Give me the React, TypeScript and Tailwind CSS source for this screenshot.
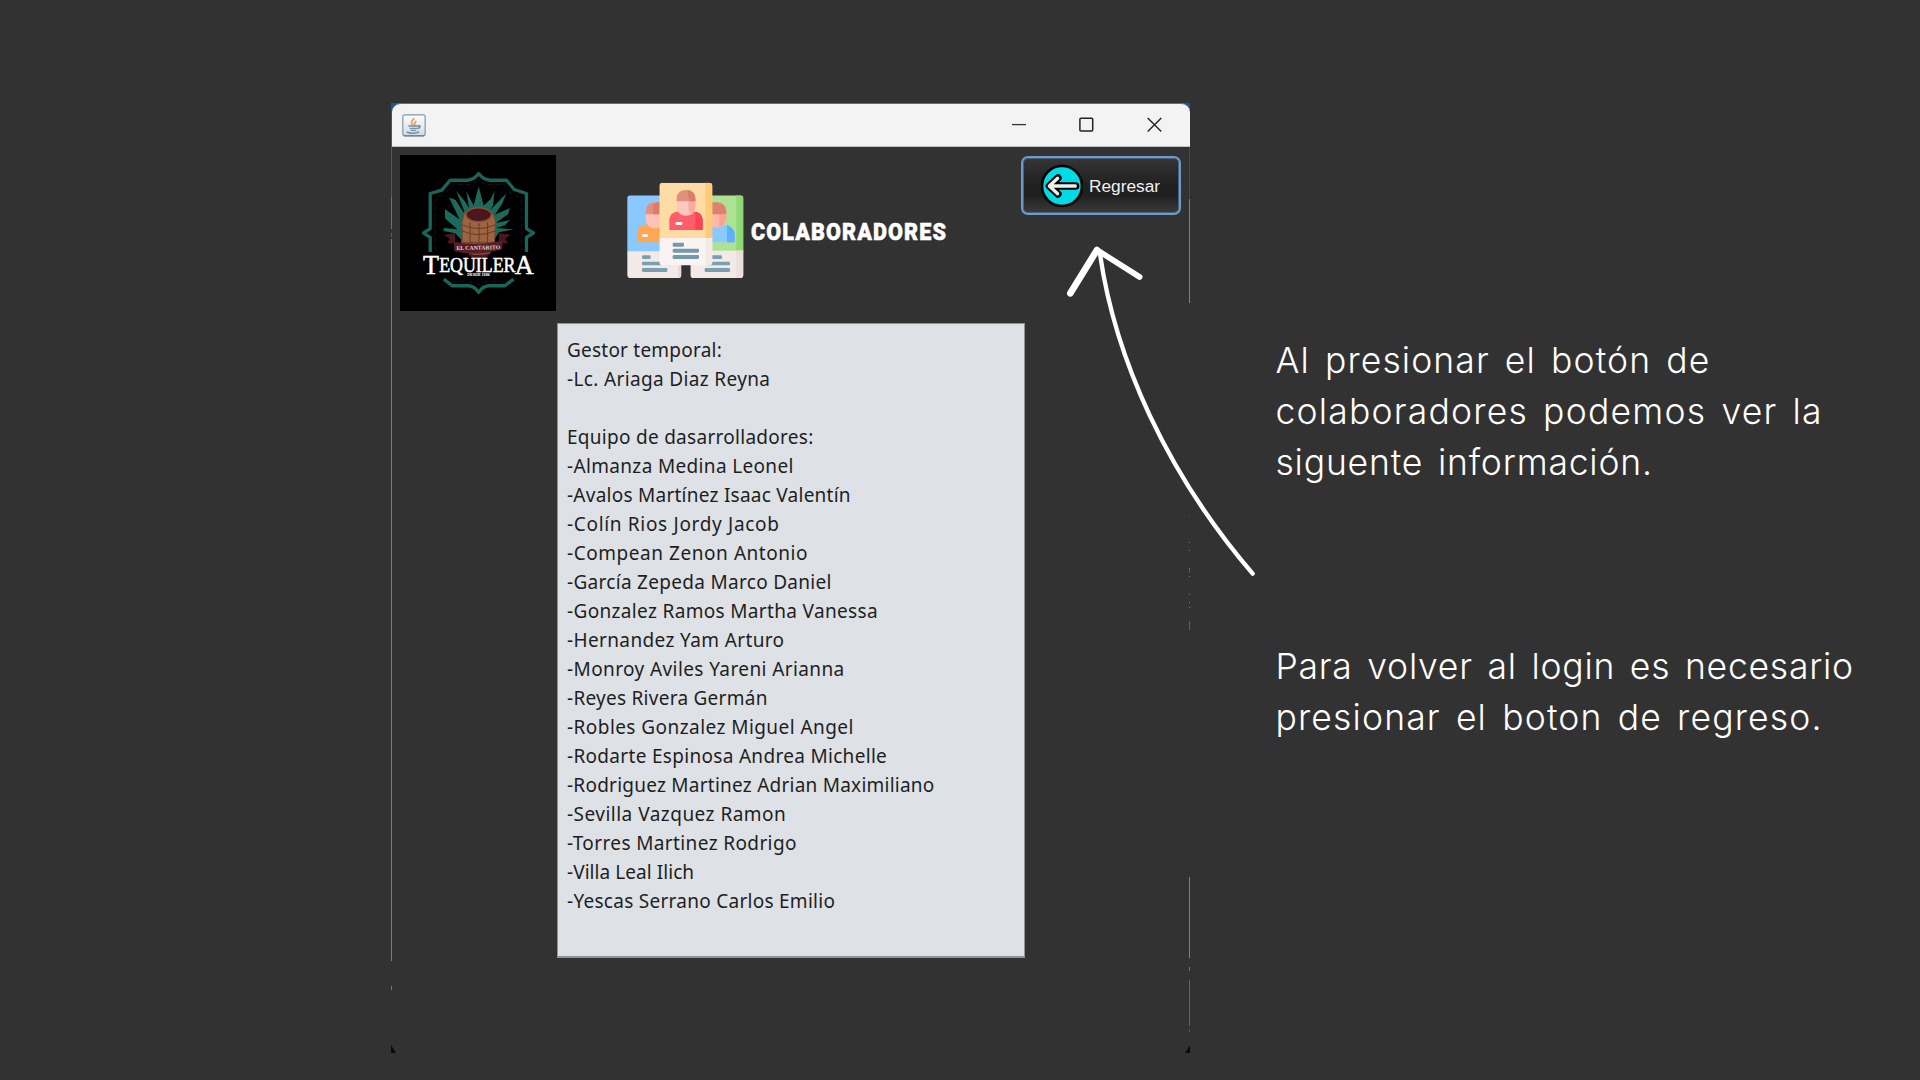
const people: [string, string][] = [
  ["Gestor temporal:", "tracking-[0.22px]"],
  ["-Lc. Ariaga Diaz Reyna", "tracking-[0.35px]"],
  ["", "tracking-normal"],
  ["Equipo de dasarrolladores:", "tracking-[0.28px]"],
  ["-Almanza Medina Leonel", "tracking-[0.34px]"],
  ["-Avalos Martínez Isaac Valentín", "tracking-[0.25px]"],
  ["-Colín Rios Jordy Jacob", "tracking-[0.68px]"],
  ["-Compean Zenon Antonio", "tracking-[0.55px]"],
  ["-García Zepeda Marco Daniel", "tracking-[0.3px]"],
  ["-Gonzalez Ramos Martha Vanessa", "tracking-[0.34px]"],
  ["-Hernandez Yam Arturo", "tracking-[0.37px]"],
  ["-Monroy Aviles Yareni Arianna", "tracking-[0.4px]"],
  ["-Reyes Rivera Germán", "tracking-[0.26px]"],
  ["-Robles Gonzalez Miguel Angel", "tracking-[0.44px]"],
  ["-Rodarte Espinosa Andrea Michelle", "tracking-[0.31px]"],
  ["-Rodriguez Martinez Adrian Maximiliano", "tracking-[0.24px]"],
  ["-Sevilla Vazquez Ramon", "tracking-[0.48px]"],
  ["-Torres Martinez Rodrigo", "tracking-[0.38px]"],
  ["-Villa Leal Ilich", "tracking-[0.06px]"],
  ["-Yescas Serrano Carlos Emilio", "tracking-[0.27px]"],
];

function JavaIcon() {
  return (
    <svg width="24" height="23" viewBox="0 0 72 69">
      <defs>
        <linearGradient id="jv" x1="0" y1="0" x2="0" y2="1">
          <stop offset="0" stopColor="#fdfdfd" />
          <stop offset="1" stopColor="#d5dbe1" />
        </linearGradient>
      </defs>
      <rect x="2.5" y="2.5" width="67" height="63" rx="6" fill="url(#jv)" stroke="#7c97ab" strokeWidth="3.5" />
      <path d="M6 65.5h60" stroke="#56788f" strokeWidth="3" />
      <path d="M37 13c-5 6-11 9-8 15 2 4 6 4 5 9M43 21c-6 4-7 7-4 13" fill="none" stroke="#eda35f" strokeWidth="5" />
      <path d="M19 36h29c7-4 9 5-2 8" fill="none" stroke="#6f91ab" strokeWidth="5" />
      <path d="M23 43h22M26 49h17" stroke="#6f91ab" strokeWidth="4" />
      <path d="M14 54c9 5 30 5 38-1" fill="none" stroke="#6f91ab" strokeWidth="4.5" />
    </svg>
  );
}

function Logo() {
  return (
    <svg className="block" width="156" height="156" viewBox="14 14 470 470">
      <rect x="14" y="14" width="471" height="471" fill="#000" />
      <g fill="none" stroke="#1b6558" strokeWidth="10" strokeLinejoin="round">
        <path d="M105 306V262L85 249L105 236V130L140 120L165 90H218Q238 88 251 70Q264 88 284 90H335L358 118L395 130V236L416 249L395 262V306" />
        <path d="M146 388L171 408H220Q240 410 251 428Q262 410 282 408H330L356 388" />
      </g>
      <g fill="none" stroke="#123a34" strokeWidth="1.6" strokeDasharray="10 6 3 5">
        <path d="M120 300V145L150 131L175 103H228L251 92L275 103H325L350 131L381 145V300" />
        <path d="M175 396H228L251 404L275 396H325" />
      </g>
      <path
        fill="#1c6a5c"
        d="M212 282L180 250L145 243L146 234L187 238L150 205L149 177L182 200L193 207L162 142L181 149L206 188L208 184L183 122L210 154L222 175L214 124L236 166L251 109L266 166L288 146L299 122L294 166L286 180L334 130L322 160L300 194L345 174L340 192L303 219L345 210L330 226L303 234L357 238L312 247L290 282Z"
      />
      <path fill="#4a161f" d="M146 254L180 250V280H156L164 266ZM347 254L312 250V280H340L331 266Z" />
      <path fill="#7d4a30" d="M209 184Q250 165 291 184L303 212L300 278L285 312Q250 322 222 312L198 278L200 212Z" />
      <path fill="#9c6440" d="M209 190L222 205H280L292 190L300 214L297 275H204L203 214Z" />
      <ellipse cx="251" cy="194" rx="38" ry="21" fill="#4a1721" stroke="#8a5132" strokeWidth="4" />
      <path d="M201 224Q250 247 302 224M200 242Q250 266 302 242M225 216V280M252 220V280M278 216V280" fill="none" stroke="#6b3927" strokeWidth="3" />
      <path fill="#5a1d28" d="M176 275Q250 292 324 270L322 298Q250 320 178 304Z" />
      <path fill="#4a161f" d="M215 312Q250 320 288 310L270 324H232Z" />
      <text x="250" y="299" textAnchor="middle" fontFamily="Liberation Serif, serif" fontSize="17" fontWeight="700" fill="#e8dcdc" textLength="132" lengthAdjust="spacingAndGlyphs" transform="rotate(-1 250 299)">
        EL CANTARITO
      </text>
      <g fill="#fff" stroke="#fff" strokeWidth="1.6" fontFamily="Liberation Serif, serif">
        <text x="83" y="373" fontSize="82" textLength="48" lengthAdjust="spacingAndGlyphs">T</text>
        <text x="132" y="366" fontSize="64" textLength="230" lengthAdjust="spacingAndGlyphs">EQUILER</text>
        <text x="360" y="373" fontSize="82" textLength="57" lengthAdjust="spacingAndGlyphs">A</text>
      </g>
      <text x="251" y="380" textAnchor="middle" fontFamily="Liberation Sans, sans-serif" fontSize="12" fontWeight="700" fill="#fff" textLength="68" lengthAdjust="spacingAndGlyphs">
        DESDE 1986
      </text>
    </svg>
  );
}

function TeamIcon() {
  return (
    <svg className="block" width="117" height="97" viewBox="0 0 351 291">
      <defs>
        <clipPath id="cl"><rect x="1" y="40" width="162" height="248" rx="10" /></clipPath>
        <clipPath id="cr"><rect x="190" y="40" width="159" height="248" rx="10" /></clipPath>
        <clipPath id="cc"><rect x="97" y="2" width="159" height="248" rx="10" /></clipPath>
      </defs>
      <g clipPath="url(#cl)">
        <rect y="40" width="163" height="170" fill="#8ac9fe" />
        <rect y="208" width="163" height="82" fill="#f3e9e6" />
        <rect x="154" y="208" width="10" height="82" fill="#e6d9d7" />
        <path d="M31 181V150Q33 130 52 128H110V181Z" fill="#ffa755" />
        <rect x="56" y="61" width="54" height="78" rx="27" fill="#fbc3b6" />
        <path d="M56 97V88Q58 61 83 61H100V97Z" fill="#e58f7e" />
        <path d="M78 97V70Q84 61 97 61V97Z" fill="#da7c6c" />
        <rect x="45" y="157" width="18" height="8" rx="4" fill="#fff" />
        <g fill="#7a9fb0">
          <rect x="45" y="220" width="26" height="11" rx="4" />
          <rect x="45" y="239" width="60" height="11" rx="4" />
          <rect x="45" y="258" width="76" height="12" rx="4" />
        </g>
      </g>
      <g clipPath="url(#cr)">
        <rect x="190" y="40" width="160" height="170" fill="#ace294" />
        <rect x="328" y="40" width="22" height="170" fill="#8fd873" />
        <rect x="190" y="206" width="160" height="84" fill="#f3e9e6" />
        <rect x="328" y="206" width="22" height="84" fill="#ebdfdd" />
        <path d="M240 181V128H290Q320 129 323 158V181Z" fill="#8ac9fe" />
        <path d="M300 181V129Q323 138 323 158V181Z" fill="#5db0fb" />
        <rect x="244" y="61" width="54" height="76" rx="27" fill="#fbb9ab" />
        <path d="M277 97V136Q298 130 298 100V97Z" fill="#f9a392" />
        <path d="M244 97V61H270Q296 62 298 88V97Z" fill="#de8170" />
        <g fill="#7a9fb0">
          <rect x="240" y="220" width="45" height="11" rx="4" />
          <rect x="240" y="239" width="69" height="11" rx="4" />
          <rect x="233" y="258" width="76" height="12" rx="4" />
        </g>
      </g>
      <g clipPath="url(#cc)">
        <rect x="97" y="2" width="160" height="168" fill="#ffdba6" />
        <rect x="235" y="2" width="22" height="168" fill="#ffcb7a" />
        <rect x="97" y="168" width="160" height="84" fill="#f9f4f3" />
        <rect x="235" y="168" width="22" height="84" fill="#f3eae8" />
      </g>
      <path d="M127 144V112Q130 91 150 89H203Q224 91 227 112V144Z" fill="#ff5d69" />
      <path d="M205 144V89Q224 91 227 112V144Z" fill="#fe444f" />
      <path d="M149 50H205V74Q202 101 177 101Q152 101 149 74Z" fill="#fdc9be" />
      <path d="M184 50H205V74Q203 92 192 96Q184 90 184 74Z" fill="#fbab9c" />
      <path d="M149 58V48Q152 24 177 24Q202 24 205 48V58Z" fill="#e18f7f" />
      <path d="M182 24Q202 26 205 48V58H190Q182 45 182 24Z" fill="#d97c69" />
      <rect x="146" y="120" width="20" height="9" rx="4" fill="#fff" />
      <g fill="#7399ab">
        <rect x="137" y="182" width="34" height="12" rx="4" />
        <rect x="137" y="200" width="79" height="12" rx="4" />
        <rect x="137" y="219" width="79" height="12" rx="4" />
      </g>
    </svg>
  );
}

function BackIcon() {
  return (
    <svg width="42" height="44" viewBox="0 0 126 132">
      <circle cx="63" cy="66" r="60" fill="#02dbe6" stroke="#050505" strokeWidth="8" />
      <path d="M104 66H30M51 42L25 66L51 90" fill="none" stroke="#050505" strokeWidth="22" strokeLinecap="round" strokeLinejoin="round" />
      <path d="M103 66H30M50 43L25 66L50 89" fill="none" stroke="#eceff0" strokeWidth="10" strokeLinecap="round" strokeLinejoin="round" />
    </svg>
  );
}

function Edge({ side }: { side: "left" | "right" }) {
  if (side === "left")
    return (
      <div className="flex w-px flex-col">
        <div className="h-[50px] bg-[#3c5f78]" />
        <div className="h-[32px] bg-[#6f7378]" />
        <div className="mt-[4px] h-[4px] bg-[#5c5c5c]" />
        <div className="mt-[2px] h-[722px] bg-[#7d7d7d]" />
        <div className="mt-[25px] h-[4px] bg-[#777]" />
      </div>
    );
  return (
    <div className="flex w-px flex-col">
      <div className="h-[51px] bg-[#44456a]" />
      <div className="mt-[1px] h-[104px] bg-[#7d7d7d]" />
      <div className="mt-[212px] h-px bg-[#5a5140]" />
      <div className="mt-[26px] h-px bg-[#777]" />
      <div className="mt-[7px] h-px bg-[#777]" />
      <div className="mt-[17px] h-[2px] bg-[#777]" />
      <div className="mt-[1px] h-px bg-[#777]" />
      <div className="mt-[4px] h-px bg-[#777]" />
      <div className="mt-[17px] h-px bg-[#777]" />
      <div className="mt-[7px] h-px bg-[#777]" />
      <div className="mt-[4px] h-px bg-[#777]" />
      <div className="mt-[13px] h-[9px] bg-[#4f6470]" />
      <div className="mt-[247px] h-[81px] bg-[#7d7d7d]" />
      <div className="mt-[9px] h-[4px] bg-[#777]" />
      <div className="mt-[9px] h-[46px] bg-[#666]" />
      <div className="mt-[3px] h-[3px] bg-[#47564f]" />
    </div>
  );
}

export default function App() {
  return (
    <main className="relative flex h-[1080px] w-[1920px] overflow-hidden bg-[#323232] pl-[391px] pt-[103px]">
      <section className="flex h-[950px] w-[799px] shrink-0 flex-col">
        <div className="h-[44px] bg-[linear-gradient(to_bottom,#1a56a0_0,#1a56a0_8px,#3c5f78_30px)]">
          <header className="ml-px flex h-[44px] w-[798px] items-center rounded-t-[9px] border-b border-t border-b-[#bcc4c1] border-t-[#54729a] bg-[#f3f3f3] pl-[10px]">
            <JavaIcon />
            <div className="ml-auto flex items-center">
              <svg width="14" height="16" viewBox="0 0 14 16"><path d="M0 7.6h14" stroke="#333" strokeWidth="1.3" /></svg>
              <svg className="ml-[53px]" width="15" height="16" viewBox="0 0 15 16"><rect x="0.9" y="1.2" width="12.8" height="12.8" rx="1" fill="none" stroke="#222" strokeWidth="1.5" /></svg>
              <svg className="ml-[53px] mr-[28px]" width="15" height="16" viewBox="0 0 15 16"><path d="M0.7 1L14.3 14.6M14.3 1L0.7 14.6" stroke="#222" strokeWidth="1.4" /></svg>
            </div>
          </header>
        </div>
        <div className="flex h-[906px]">
          <Edge side="left" />
          <div className="flex w-[797px] flex-col">
            <div className="flex h-[176px] items-start">
              <div className="ml-[8px] mt-[8px]"><Logo /></div>
              <div className="ml-[71px] mt-[35px]"><TeamIcon /></div>
              <h1 className="ml-[7px] mt-[71px] w-[200px] origin-left scale-x-90 font-['Roboto',sans-serif] text-[24px] font-black leading-[28px] tracking-[1.2px] text-white [-webkit-text-stroke:0.5px_#fff]">
                COLABORADORES
              </h1>
              <button className="ml-[70px] mt-[9px] flex h-[59px] w-[160px] shrink-0 items-center rounded-[7px] border-2 border-[#6f9bcb] bg-[linear-gradient(to_bottom,#363636,#2a2a2a_25%,#202020_50%,#202020_68%,#3a3a3a)] pl-[18px] shadow-[inset_0_0_0_1px_#4a5f78]">
                <BackIcon />
                <span className="ml-[6px] mt-[2px] font-['Liberation_Sans',Arial,sans-serif] text-[17.3px] leading-none text-[#f0f0f0]">Regresar</span>
              </button>
            </div>
            <div className="ml-[164.5px] h-[635px] w-[468.5px] border border-b-2 border-[#8d939a] bg-[#dee1e6] pl-[9.5px] pt-[12px] font-['Noto_Sans',sans-serif] text-[19px] leading-[29px] text-[#1e1e1e]">
              {people.map(([name, spacing], i) => (
                <p key={i} className={"h-[29px] whitespace-nowrap " + spacing}>{name}</p>
              ))}
            </div>
          </div>
          <Edge side="right" />
        </div>
      </section>

      <div className="ml-[85.5px] mt-[232px] whitespace-nowrap font-['Inter',sans-serif] text-[35.5px] font-[330] leading-[51.2px] text-white [word-spacing:4px]">
        <p className="tracking-[1.1px]">Al presionar el botón de</p>
        <p className="tracking-[1.2px]">colaboradores podemos ver la</p>
        <p className="tracking-[0.8px]">siguente información.</p>
        <p className="mt-[152px] tracking-[0.75px]">Para volver al login es necesario</p>
        <p className="tracking-[1.15px]">presionar el boton de regreso.</p>
      </div>

      <svg className="absolute left-[1040px] top-[230px]" width="230" height="360" viewBox="0 0 690 1080" fill="none" stroke="#fff" strokeLinecap="round">
        <path d="M180 72C225 385 380 730 638 1031" strokeWidth="13" />
        <path d="M171 60L91 190" strokeWidth="20" />
        <path d="M171 60L299 141" strokeWidth="17" />
      </svg>

      <svg className="absolute left-[391px] top-[1042px]" width="799" height="12" viewBox="0 0 799 12">
        <path d="M0 3L5 11H0Z" fill="#0a0a0a" />
        <path d="M799 3L794 11H799Z" fill="#0a0a0a" />
      </svg>
    </main>
  );
}
